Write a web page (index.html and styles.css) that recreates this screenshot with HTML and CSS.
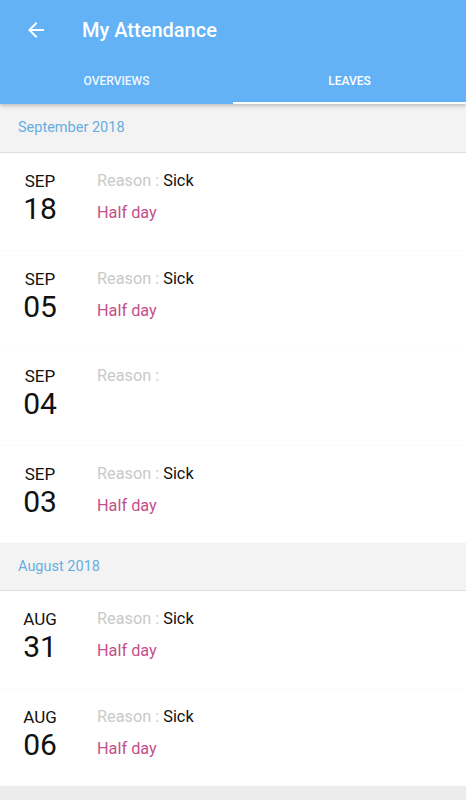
FILE: index.html
```html
<!DOCTYPE html>
<html lang="en">
<head>
<meta charset="utf-8">
<title>My Attendance</title>
<link rel="stylesheet" href="styles.css">
</head>
<body>
<header class="appbar">
  <div class="toolbar">
    <svg class="back" width="24" height="24" viewBox="0 0 24 24"><path d="M20 11H7.83l5.59-5.59L12 4l-8 8 8 8 1.41-1.41L7.83 13H20v-2z" fill="#fff"/></svg>
    <h1 class="title">My Attendance</h1>
  </div>
  <nav class="tabs">
    <div class="tab">OVERVIEWS</div>
    <div class="tab active">LEAVES</div>
  </nav>
</header>
<main class="list">
  <div class="section">September 2018</div>
  <div class="row">
    <div class="date"><div class="mon">SEP</div><div class="day">18</div></div>
    <div class="info"><div class="reason"><span class="lbl">Reason : </span>Sick</div><div class="type">Half day</div></div>
  </div>
  <div class="row">
    <div class="date"><div class="mon">SEP</div><div class="day">05</div></div>
    <div class="info"><div class="reason"><span class="lbl">Reason : </span>Sick</div><div class="type">Half day</div></div>
  </div>
  <div class="row">
    <div class="date"><div class="mon">SEP</div><div class="day">04</div></div>
    <div class="info"><div class="reason"><span class="lbl">Reason : </span></div></div>
  </div>
  <div class="row">
    <div class="date"><div class="mon">SEP</div><div class="day">03</div></div>
    <div class="info"><div class="reason"><span class="lbl">Reason : </span>Sick</div><div class="type">Half day</div></div>
  </div>
  <div class="section">August 2018</div>
  <div class="row">
    <div class="date"><div class="mon">AUG</div><div class="day">31</div></div>
    <div class="info"><div class="reason"><span class="lbl">Reason : </span>Sick</div><div class="type">Half day</div></div>
  </div>
  <div class="row">
    <div class="date"><div class="mon">AUG</div><div class="day">06</div></div>
    <div class="info"><div class="reason"><span class="lbl">Reason : </span>Sick</div><div class="type">Half day</div></div>
  </div>
</main>
</body>
</html>
```
FILE: styles.css
```css
html, body {
  margin: 0;
  padding: 0;
}
body {
  font-family: Roboto, "Noto Sans", sans-serif;
  background: #ececec;
  min-height: 800px;
}
.appbar {
  background: #62b2f5;
  position: relative;
  z-index: 1;
  box-shadow: 0 2px 4px rgba(0, 0, 0, 0.22);
}
.toolbar {
  height: 60px;
  display: flex;
  align-items: center;
  padding-left: 24px;
}
.back {
  display: block;
}
.title {
  margin: 0 0 0 34px;
  font-size: 20px;
  font-weight: 500;
  color: #fff;
}
.tabs {
  display: grid;
  grid-template-columns: 233px 1fr;
  height: 44px;
}
.tab {
  display: flex;
  align-items: center;
  justify-content: center;
  font-size: 12px;
  font-weight: 500;
  color: rgba(255, 255, 255, 0.92);
  border-bottom: 2px solid transparent;
}
.tab.active {
  color: #fff;
  border-bottom-color: #fff;
}
.list {
  background: #fff;
}
.section {
  background: #f3f3f3;
  height: 48px;
  line-height: 48px;
  padding-left: 18px;
  font-size: 14.5px;
  color: #66aee0;
  border-bottom: 1px solid #dedede;
  box-sizing: border-box;
}
.section:first-child {
  height: 49px;
  line-height: 47px;
}
.row {
  display: flex;
  height: 97.5px;
  box-sizing: border-box;
  padding-top: 18px;
  border-bottom: 1px solid #fbfbfb;
}
.date {
  width: 50px;
  margin-left: 15px;
  text-align: center;
  color: #111;
}
.mon {
  font-size: 17px;
  line-height: 20px;
}
.day {
  font-size: 30px;
  line-height: 35px;
}
.info {
  margin-left: 32px;
  font-size: 16.3px;
}
.reason {
  line-height: 20px;
  color: #111;
}
.lbl {
  color: #c9c9c9;
}
.type {
  margin-top: 12px;
  line-height: 20px;
  color: #c4508a;
}
```
